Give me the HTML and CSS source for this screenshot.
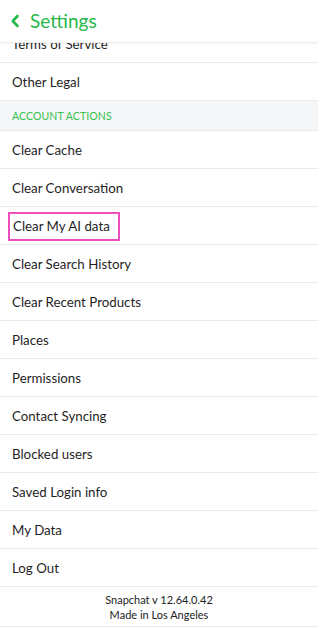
FILE: index.html
```html
<!DOCTYPE html>
<html lang="en">
<head>
<meta charset="utf-8">
<title>Settings</title>
<link rel="stylesheet" href="styles.css">
</head>
<body>
<div class="screen">
  <header class="topbar">
    <svg class="back" width="10" height="14" viewBox="0 0 10 14" aria-hidden="true">
      <path d="M7.5 2 L2.8 7 L7.5 12" fill="none" stroke="#27b84a" stroke-width="2.6" stroke-linecap="round" stroke-linejoin="round"/>
    </svg>
    <h1 class="title">Settings</h1>
  </header>
  <main class="list">
    <div class="row row-clipped">Terms of Service</div>
    <div class="row">Other Legal</div>
    <div class="section">ACCOUNT ACTIONS</div>
    <div class="row">Clear Cache</div>
    <div class="row">Clear Conversation</div>
    <div class="row"><span class="highlight">Clear My AI data</span></div>
    <div class="row">Clear Search History</div>
    <div class="row">Clear Recent Products</div>
    <div class="row">Places</div>
    <div class="row">Permissions</div>
    <div class="row">Contact Syncing</div>
    <div class="row">Blocked users</div>
    <div class="row">Saved Login info</div>
    <div class="row">My Data</div>
    <div class="row">Log Out</div>
    <footer class="footer">
      <div>Snapchat v 12.64.0.42</div>
      <div>Made in Los Angeles</div>
    </footer>
  </main>
</div>
</body>
</html>
```
FILE: styles.css
```css
* { box-sizing: border-box; }
html, body {
  margin: 0;
  padding: 0;
  background: #ffffff;
}
body {
  font-family: Lato, "Noto Sans", "DejaVu Sans", sans-serif;
  color: #1f1f1f;
}
.screen {
  width: 318px;
  height: 628px;
  overflow: hidden;
  display: flex;
  flex-direction: column;
}
.topbar {
  height: 43px;
  flex: 0 0 43px;
  display: flex;
  align-items: center;
  padding-left: 10px;
  padding-bottom: 1px;
  border-bottom: 1px solid #ececec;
  box-shadow: 0 1px 2px rgba(0,0,0,0.04);
  position: relative;
  z-index: 1;
  background: #fff;
}
.back {
  display: block;
  margin-right: 10px;
}
.title {
  margin: 0;
  font-size: 19px;
  font-weight: 400;
  color: #27b84a;
}
.list {
  flex: 1;
  overflow: hidden;
}
.row {
  height: 38px;
  display: flex;
  align-items: center;
  padding-left: 12px;
  padding-top: 1px;
  font-size: 13.3px;
  border-bottom: 1px solid #ebebeb;
}
.row-clipped {
  margin-top: -18px;
}
.section {
  height: 30px;
  display: flex;
  align-items: center;
  padding-left: 12px;
  font-size: 10.5px;
  color: #33c14f;
  background: #f5f6f8;
  border-bottom: 1px solid #ebebeb;
  letter-spacing: 0.1px;
}
.highlight {
  margin-left: -4px;
  padding: 4px 8px 5px 3px;
  border: 2px solid #ee4fbd;
}
.footer {
  height: 40px;
  display: flex;
  flex-direction: column;
  align-items: center;
  justify-content: center;
  font-size: 11px;
  line-height: 15px;
  color: #222;
  border-bottom: 1px solid #ebebeb;
}
```
